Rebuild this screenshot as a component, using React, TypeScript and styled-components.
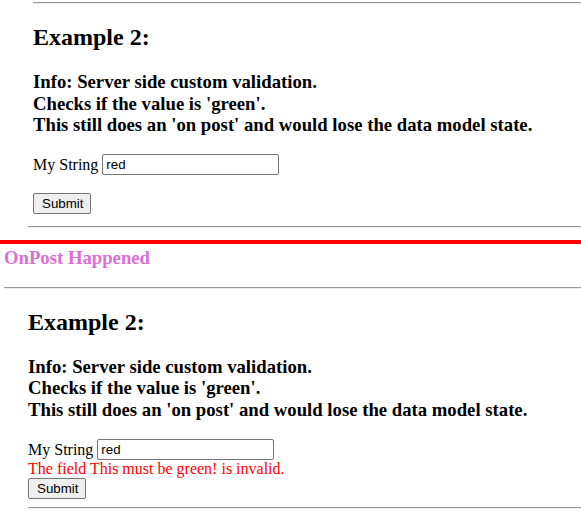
import React from "react"
import styled, { createGlobalStyle } from "styled-components"

const GlobalStyle = createGlobalStyle`
  html, body {
    margin: 0;
    padding: 0;
    background: #fff;
  }
  body {
    font-family: "Liberation Serif", "Times New Roman", serif;
    font-size: 16px;
    color: #000;
  }
`

const Page = styled.div`
  padding-top: 2px;
  width: 581px;
`

const Section = styled.section<{ $indent: number }>`
  padding-left: ${(p) => p.$indent}px;
`

const Rule = styled.hr<{ $left: number; $top?: number }>`
  height: 0;
  margin: ${(p) => p.$top ?? 0}px 0 0 ${(p) => p.$left}px;
  border: none;
  border-top: 1px solid #9a9a9a;
  border-bottom: 1px solid #eeeeee;
`

const Title = styled.h2`
  margin: 20px 0 0;
  font-size: 24px;
  font-weight: bold;
  line-height: 27.6px;
`

const Info = styled.h3`
  margin: 19.5px 0 0;
  font-size: 18.72px;
  font-weight: bold;
  line-height: 21.5px;
`

const Form = styled.form`
  margin-top: 18.7px;
`

const FieldRow = styled.div`
  display: flex;
  align-items: center;
  gap: 4px;
  height: 21px;
`

const Label = styled.label`
  line-height: 18px;
`

const TextInput = styled.input`
  box-sizing: border-box;
  width: 177px;
  height: 21px;
  padding: 1px 3px;
  border: 1px solid #767676;
  border-radius: 2px;
  font-family: "Liberation Sans", Arial, sans-serif;
  font-size: 13.33px;
  color: #000;
`

const ErrorLine = styled.div`
  height: 18px;
  line-height: 18px;
  color: #ff0000;
`

const SubmitButton = styled.button`
  display: block;
  box-sizing: border-box;
  height: 21px;
  padding: 1px 7px 1px 8px;
  border: 1px solid #767676;
  border-radius: 2px;
  background: #efefef;
  font-family: "Liberation Sans", Arial, sans-serif;
  font-size: 13.33px;
  color: #000;
`

const Banner = styled.div`
  height: 4px;
  margin-top: 12px;
  background: #ff0000;
`

const Notice = styled.h3`
  margin: 3px 0 0 4px;
  font-size: 18.72px;
  font-weight: bold;
  line-height: 21.5px;
  color: #da70d6;
`

type ExampleProps = {
  indent: number
  error?: string
}

const ExampleBlock = ({ indent, error }: ExampleProps) => (
  <Section $indent={indent}>
    <Title>Example 2:</Title>
    <Info>
      Info: Server side custom validation.
      <br />
      Checks if the value is 'green'.
      <br />
      This still does an 'on post' and would lose the data model state.
    </Info>
    <Form onSubmit={(e) => e.preventDefault()}>
      <FieldRow>
        <Label htmlFor={`str-${indent}`}>My String</Label>
        <TextInput id={`str-${indent}`} defaultValue="red" />
      </FieldRow>
      <ErrorLine>{error}</ErrorLine>
      <SubmitButton type="submit">Submit</SubmitButton>
    </Form>
  </Section>
)

export default function App() {
  return (
    <Page>
      <GlobalStyle />
      <Rule $left={33} />
      <ExampleBlock indent={33} />
      <Rule $left={28} $top={12} />
      <Banner />
      <Notice>OnPost Happened</Notice>
      <Rule $left={4} $top={18} />
      <ExampleBlock indent={28} error="The field This must be green! is invalid." />
      <Rule $left={28} $top={8} />
    </Page>
  )
}
